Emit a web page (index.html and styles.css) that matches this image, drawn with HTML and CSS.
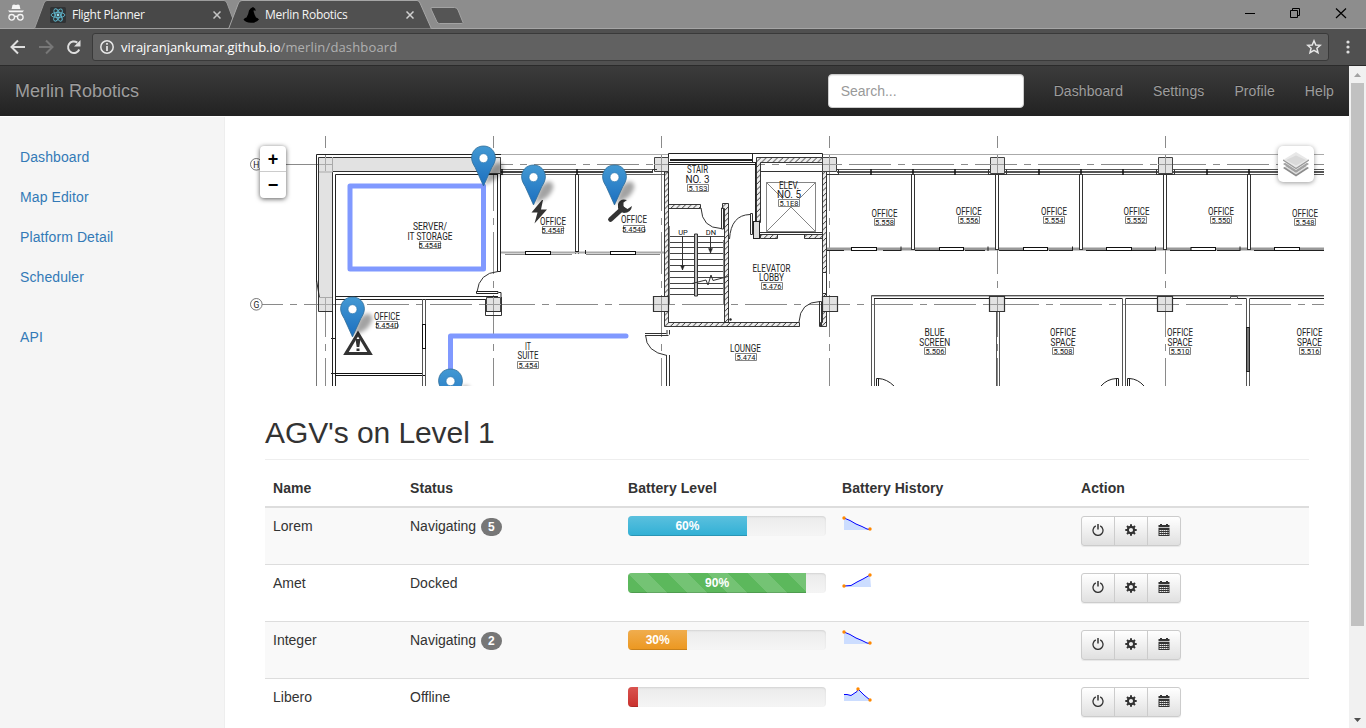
FILE: index.html
```html
<!DOCTYPE html>
<html lang="en">
<head>
<meta charset="utf-8">
<title>Merlin Robotics</title>
<link rel="stylesheet" href="styles.css">
</head>
<body>
<svg class="defs" width="0" height="0">
  <defs>
    <linearGradient id="pinFill" x1="0" y1="0" x2="0" y2="1"><stop offset="0" stop-color="#4399d3"/><stop offset="1" stop-color="#1c6fbf"/></linearGradient>
    <filter id="soft" x="-50%" y="-50%" width="200%" height="200%"><feGaussianBlur stdDeviation="2.2"/></filter>
    <pattern id="hatch" width="5.6" height="5.6" patternUnits="userSpaceOnUse"><rect width="5.6" height="5.6" fill="#eee"/><path d="M-1 6.6L6.6 -1M-1 1L1 -1M4.6 6.6L6.6 4.6" stroke="#222" stroke-width=".9"/></pattern>
    <symbol id="pin" viewBox="0 0 60 42" overflow="visible">
      <path d="M13 40L19 23Q25 15 31 18Q35 24 26 33Z" fill="#000" opacity=".36" filter="url(#soft)"/>
      <path d="M12.5 .5C5.5 .5 .6 5.800 .6 12.400C.6 16 2.400 19 4.200 22L12.500 40.400L20.800 22C22.600 19 24.400 16 24.400 12.400C24.400 5.800 19.500 .5 12.500 .5Z" fill="url(#pinFill)" stroke="#2e6c97" stroke-width=".8"/>
      <circle cx="12.5" cy="12.7" r="4.5" fill="#fff" stroke="#2e78b0" stroke-width=".7"/>
    </symbol>
    <symbol id="power" viewBox="0 0 12 12"><path d="M3.8 1.9A5 5 0 1 0 8.2 1.9" fill="none" stroke="#333" stroke-width="1.3"/><path d="M6 0V5.6" stroke="#333" stroke-width="1.5"/></symbol>
    <symbol id="gear" viewBox="0 0 12 12"><circle cx="6" cy="6" r="3.1" fill="none" stroke="#333" stroke-width="2.1"/><path d="M6 .3V2.4M6 9.6V11.7M.3 6H2.4M9.6 6H11.7M2 2L3.5 3.5M8.5 8.5L10 10M10 2L8.5 3.5M3.5 8.5L2 10" stroke="#333" stroke-width="2"/></symbol>
    <symbol id="calendar" viewBox="0 0 12 12"><path d="M.5 1H2V0H4V1H8V0H10V1H11.5V3.2H.5ZM.5 4H11.5V12H.5Z" fill="#333"/><path d="M1.5 6.500H10.500M1.500 8.500H10.500M1.500 10.500H10.500" stroke="#fff" stroke-width=".9" stroke-dasharray="1.5 .5"/></symbol>
  </defs>
</svg>

<header class="browser">
  <div class="titlebar">
    <svg class="tab-shapes" width="480" height="29">
      <path d="M34.500 28.500L44 3Q45 .5 47 .5H224Q226 .5 227 3L236.500 28.500Z" fill="#484848" stroke="#9c9c9c"/>
      <path d="M228.500 29L238.500 3Q239.500 .5 242 .5H417Q419 .5 420 3L431.500 29Z" fill="#505050" stroke="#a6a6a6"/>
      <path d="M432 7.500H454.500Q457 7.500 458 10L463 22.500Q463 23.500 461 23.500H439.500Q438 23.500 437 22L431 9Q430.500 7.500 432 7.500Z" fill="#555" stroke="#a3a3a3"/>
    </svg>
    <svg class="incognito" width="18" height="18" viewBox="0 0 18 18"><path d="M4.600 5L5.500 1Q6.500 .1 9 .9Q11.500 .1 12.500 1L13.400 5Z" fill="#f5f5f5"/><path d="M1 6.500H17L15.500 8.200H2.500Z" fill="#f5f5f5"/><g fill="none" stroke="#f5f5f5" stroke-width="1.300"><circle cx="4.700" cy="13.300" r="2.800"/><circle cx="13.300" cy="13.300" r="2.800"/><path d="M7.500 13Q9 11.500 10.500 13"/></g></svg>
    <div class="tab tab-one">
      <svg width="16" height="16" viewBox="0 0 16 16"><rect width="16" height="16" rx="1.500" fill="#303335"/><g fill="none" stroke="#5fb6cc" stroke-width=".9"><ellipse cx="8" cy="8" rx="6.900" ry="2.600"/><ellipse cx="8" cy="8" rx="6.900" ry="2.600" transform="rotate(60 8 8)"/><ellipse cx="8" cy="8" rx="6.900" ry="2.600" transform="rotate(120 8 8)"/></g><circle cx="8" cy="8" r="1.400" fill="#8fdbec"/></svg>
      <span class="tab-name">Flight Planner</span>
      <svg class="x" width="8" height="8" viewBox="0 0 8 8"><path d="M.5 .5L7.500 7.500M7.500 .5L.5 7.500" stroke="#c4c4c4" stroke-width="1.500"/></svg>
    </div>
    <div class="tab tab-two">
      <svg width="16" height="16" viewBox="0 0 16 16"><path d="M.5 12.500Q2 10.500 3.500 10.500Q5.500 7 6 3.500Q7 1 10 0Q13 1.500 12.500 4Q10.500 2.500 10.500 4Q11.500 8 13 10.500Q15 11 16 12.500Q14 15.600 8 15.800Q2 15.600 .5 12.500Z" fill="#000"/></svg>
      <span class="tab-name">Merlin Robotics</span>
      <svg class="x" width="8" height="8" viewBox="0 0 8 8"><path d="M.5 .5L7.500 7.500M7.500 .5L.5 7.500" stroke="#d0d0d0" stroke-width="1.500"/></svg>
    </div>
    <svg class="window-buttons" width="102" height="12" viewBox="0 0 102 12" fill="none" stroke="#000"><path d="M0 6.500H10"/><path d="M45.500 3.500H52.500V10.500H45.500ZM47.500 3.500V1.500H54.500V8.500H52.500"/><path d="M91 1.500L101 11M101 1.500L91 11" stroke-width="1.200"/></svg>
  </div>
  <div class="toolbar">
    <svg class="nav-icons" width="74" height="16" viewBox="0 0 74 16" fill="none"><path d="M15 8H2M8 1.500L1.500 8L8 14.500" stroke="#dedede" stroke-width="2"/><path d="M29 8H42M36 1.500L42.500 8L36 14.500" stroke="#777" stroke-width="2"/><path d="M69.200 10.500A5.800 5.800 0 1 1 67.300 3.600" stroke="#dedede" stroke-width="2"/><path d="M70.500 1V7.500H64Z" fill="#dedede"/></svg>
    <div class="omnibox">
      <svg width="14" height="14" viewBox="0 0 14 14"><circle cx="7" cy="7" r="6.200" fill="none" stroke="#e8e8e8" stroke-width="1.500"/><path d="M7 3V4.800M7 6V11" stroke="#e8e8e8" stroke-width="1.700"/></svg>
      <span class="url"><span class="host">virajranjankumar.github.io</span><span class="path">/merlin/dashboard</span></span>
      <svg class="star" width="16" height="16" viewBox="0 0 16 16"><path d="M8 1.800L9.800 6L14.300 6.300L10.900 9.200L12 13.700L8 11.300L4 13.700L5.100 9.200L1.700 6.300L6.200 6Z" fill="none" stroke="#e6e6e6" stroke-width="1.500"/></svg>
    </div>
    <svg class="menu" width="4" height="14" viewBox="0 0 4 14" fill="#dedede"><circle cx="2" cy="2" r="1.600"/><circle cx="2" cy="7" r="1.600"/><circle cx="2" cy="12" r="1.600"/></svg>
  </div>
</header>

<div class="viewport">
  <div class="page">
    <nav class="navbar">
      <a class="brand">Merlin Robotics</a>
      <input class="search" type="text" placeholder="Search...">
      <a>Dashboard</a><a>Settings</a><a>Profile</a><a>Help</a>
    </nav>
    <div class="columns">
      <aside class="sidebar">
        <ul><li>Dashboard</li><li>Map Editor</li><li>Platform Detail</li><li>Scheduler</li></ul>
        <ul><li>API</li></ul>
      </aside>
      <main class="content">
        <div class="map">
<svg class="plan" width="1074" height="250" viewBox="250 136 1074 250">
  <!-- structural grid -->
  <g fill="none" stroke="#8a8a8a" stroke-dasharray="42 7 7 7">
    <path d="M262 164.500H1324" stroke-dashoffset="43"/><path d="M262 304.500H1324" stroke-dashoffset="21"/>
    <path d="M325.500 136V386M493.500 136V386M661.500 136V386M829.500 136V386M997.500 136V386M1165.500 136V386" stroke-dashoffset="30"/>
  </g>
  <g fill="#fff" stroke="#555" stroke-width=".8"><circle cx="256.300" cy="164.300" r="5.800"/><circle cx="256.300" cy="304.300" r="5.800"/></g>
  <path d="M501 154.500H669M823 154.500H1324" stroke="#aaa" fill="none"/>
  <path d="M316.500 280V386" stroke="#777" fill="none"/>
  <!-- server room shell -->
  <path d="M318.500 157.500H500.500V171.500H332.500V311.500H318.500Z" fill="#e2e2e2" stroke="#333"/>
  <path d="M316.500 282V154.500H501M316.500 280L319.500 298M335.500 386V174.500H498M335 296.500H498M335 299.500H486" fill="none" stroke="#222"/>
  <path d="M325.500 157V171M319 164.500H332M332.500 157V172H319M325.500 297V311M319 304.500H332M319 297.500H332" fill="none" stroke="#aaa"/>
  <path d="M332.500 311V386M331 338.500H336M331 373.500H336" fill="none" stroke="#222"/>
  <path d="M497.500 174V271.500H500.500V172" fill="#fff" stroke="#222"/>
  <path d="M498 271.500Q479 273 477 292" fill="none" stroke="#333"/><path d="M476.500 291.500H498V293.500H476.500ZM498.500 292.500H501V297" fill="none" stroke="#222"/>
  <path d="M335 373.500H422M335 375.500H425" fill="none" stroke="#111"/>
  <path d="M422.500 299V386M425.500 299V386" stroke="#555"/><rect x="422.500" y="324.500" width="3" height="24" fill="#fff" stroke="#111"/>
  <!-- offices west -->
  <g fill="none"><path d="M501 169.500H653M501 174.500H664" stroke="#666"/><path d="M501 172H653" stroke="#444" stroke-width="2"/><path d="M577 169V175M502 169V175" stroke="#111" stroke-width="1.500"/></g>
  <path d="M575.500 174V254M578.500 174V254" stroke="#333"/><path d="M501 252.500H664" stroke="#aaa" stroke-width="2"/><path d="M505 254.500H525M550 254.500H572M586 254.500H611M635 254.500H660" stroke="#888" fill="none"/>
  <g fill="#fff" stroke="#111"><rect x="525.500" y="251.500" width="25" height="3"/><rect x="610.500" y="251.500" width="25" height="3"/></g>
  <path d="M585.500 250V254M575 251.500H579" stroke="#222"/>
  <!-- stair core -->
  <g fill="none" stroke="#222"><path d="M668.500 204V153.500H822.500V157M668 164.500H756M752.500 154V162M669 162.500H756M755.500 162V222"/><path d="M670 160H752" stroke-width="1.800"/></g>
  <g fill="url(#hatch)" stroke="#222" stroke-width=".9">
    <path d="M664.500 172V326.500H799.500V322.500H668.500V172Z"/>
    <path d="M668.500 204.500H700.500V208.500H668.500Z"/>
    <path d="M722.500 203.500H728.500V322.500H724.500V208.500H722.500Z"/>
    <path d="M756.500 157.500H822.500V162.500H760.500V222.500H756.500Z"/>
    <path d="M760.500 234.500H777.500V238.500H760.500ZM804.500 234.500H822.500V238.500H804.500Z"/>
    <path d="M822.500 171.500H826.500V272.500H822.500ZM822.500 293.500H826.500V326.500H820.500V322.500H822.500Z"/>
  </g>
  <path d="M822.500 272.500H826.500V293.500H822.500Z" fill="#fff" stroke="#333"/>
  <rect x="753.500" y="221.500" width="6" height="17" fill="#ddd" stroke="#222"/>
  <path d="M760 171.500H822M760 232.500H822M760 234.500H822" stroke="#333" fill="none"/>
  <path d="M766.500 182.500H815.500V231.500H766.500ZM766.500 182.500L815.500 231.500M815.500 182.500L766.500 231.500" fill="none" stroke="#777" stroke-width=".9"/>
  <g fill="none" stroke="#333"><path d="M701 208Q702 228 721 228.500M721.500 208H723.500V229H721.500ZM750 214.500Q731 215 729.500 239M750.500 213.500H752.500V234.500H750.500Z"/>
    <path d="M669 236.500H724M669 242.500H724M669 247.500H724M669 253.500H724M669 259.500H724M669 265.500H724M669 271.500H724M669 277.500H724M669 283.500H724M669 288.500H724M669 294.500H724" stroke="#444"/>
    <path d="M694.500 234V296H697.500V234Z" fill="#bbb"/><path d="M669.500 226V305M723.500 240V305" stroke="#888"/>
    <path d="M682.500 236V270M710.500 236V253M692 283.500L706 280L708 285L711 275L713 280.500L728 276.500"/><path d="M680.500 265.500L682.500 270L684.500 265.500ZM708.500 248.500L710.500 253L712.500 248.500Z" fill="#222" stroke-width=".5"/>
    <path d="M820 301.500Q800 302 799 322M819.500 301.500H821.500V326.500H819.500Z"/>
    <path d="M667 355.500Q646 352 645.500 335M645 333.500H666.500M645 335.500H668.500M667 330V334.500M669.500 330V334.500M666.500 355V386M669.500 355V386"/>
  </g>
  <circle cx="730.500" cy="319.500" r="1.200" fill="#222"/>
  <!-- offices east -->
  <g fill="none"><path d="M827 169.500H1324M827 174.500H1324" stroke="#555"/><path d="M837 172H1324" stroke="#555" stroke-width="1.800"/><path d="M871 169V175M913 169V175M955 169V175M1039 169V175M1081 169V175M1123 169V175M1207 169V175M1249 169V175" stroke="#111" stroke-width="1.500"/>
    <path d="M827 249H1324" stroke="#999" stroke-width="3"/><path d="M827 250.500H844M883 250.500H901M915 250.500H939M965 250.500H985M999 250.500H1024M1049 250.500H1073M1086 250.500H1107M1132 250.500H1155M1170 250.500H1191M1217 250.500H1240M1254 250.500H1275M1300 250.500H1324" stroke="#222"/></g>
  <g fill="#fff" stroke="#333"><rect x="911.500" y="174.500" width="3" height="75"/><rect x="995.500" y="174.500" width="3" height="75"/><rect x="1079.500" y="174.500" width="3" height="75"/><rect x="1163.500" y="174.500" width="3" height="75"/><rect x="1247.500" y="174.500" width="3" height="75"/></g>
  <g fill="#fff" stroke="#111"><rect x="851.500" y="247.500" width="25" height="3"/><rect x="939.500" y="247.500" width="24" height="3"/><rect x="1023.500" y="247.500" width="24" height="3"/><rect x="1106.500" y="247.500" width="25" height="3"/><rect x="1191" y="247.500" width="24.500" height="3"/><rect x="1274.500" y="247.500" width="25" height="3"/></g>
  <path d="M901 246.500V251M988 246.500V251M1072.500 246.500V251M1155.500 246.500V251M1240 246.500V251" stroke="#222"/>
  <!-- lower rooms -->
  <g fill="none" stroke="#555"><path d="M871.500 386V295.500H1324M874.500 386V298.500H990M1005 298.500H1122.500V386M1125.500 386V298.500H1157M1173 298.500H1246.500V386M1249.500 386V298.500H1324"/><path d="M872 296.500H1324" stroke="#bbb"/><path d="M996.500 312V386M999.500 312V386"/></g>
  <path d="M874 298.500H989M1005 298.500H1122M1126 298.500H1157M1173 298.500H1246M1250 298.500H1324" stroke="#222"/>
  <rect x="1246.500" y="327.500" width="3" height="44" fill="#777" stroke="#222"/>
  <path d="M1230.500 296.500H1237.500V298.500H1230.500Z" fill="#fff" stroke="#555"/>
  <path d="M878.500 386V378.500Q887 379 894 386M876.500 386V378.500H879M1116.500 386V378.500Q1107 379 1101 386M1118.500 386V378.500H1116M1129.500 386V378.500Q1138 379 1144 386M1127.500 386V378.500H1130" fill="none" stroke="#222"/>
  <!-- columns -->
  <g fill="#e2e2e2" stroke="#444"><path d="M486.500 157.500H500.500V173.500H486.500ZM654.500 157.500H668.500V171.500H654.500ZM822.500 157.500H836.500V171.500H822.500ZM990.500 157.500H1004.500V173.500H990.500ZM1158.500 157.500H1172.500V173.500H1158.500ZM486.500 297.500H500.500V311.500H486.500Z"/>
    <path d="M653.500 296.500H668.500V311.500H653.500ZM822.500 296.500H837.500V311.500H822.500ZM989.500 296.500H1004.500V311.500H989.500ZM1157.500 296.500H1172.500V311.500H1157.500Z" stroke="#333" stroke-width="1.200"/></g>
  <path d="M485.500 299V315.500H501.500V297M486 311.500H501M652.500 172V169.500H657M836.500 169.500H838.500V174.500H827M988.500 169.500V174.500H1006.500V169.500M1156.500 169.500V174.500H1174.500V169.500" fill="none" stroke="#333"/>
  <path d="M486 304.500H501M493.500 297V311M654 164.500H668M661.500 157V171M654 304.500H668M661.500 297V311M823 164.500H837M829.500 157V171M823 304.500H837M829.500 297V311M990 164.500H1004M997.500 157V173M990 304.500H1004M997.500 297V311M1158 164.500H1172M1165.500 157V173M1158 304.500H1172M1165.500 297V311" stroke="#999" fill="none"/>
  <!-- vehicle paths -->
  <g fill="none" stroke="#8099ff" stroke-width="5" stroke-linejoin="round" stroke-linecap="round"><path d="M350 186H483.500V269H350Z"/><path d="M450.500 386V336H626"/></g>
  <!-- event icons and vehicles -->
  <path d="M358 333.500L370 353.500H346Z" fill="#fff" stroke="#333" stroke-width="3.200"/><path d="M355.500 339H360.500L359.300 347H356.700ZM356.500 348.500H359.500V351H356.500Z" fill="#333"/>
  <path d="M542 200L531.500 212.500H537.500L534.500 223.500L547 209.500H541L543 200Z" fill="#333"/>
  <path d="M610.500 219.500L622.500 208.500" stroke="#333" stroke-width="4.800" stroke-linecap="round"/><path d="M627 200Q620 198 618 204Q617 212 624 213Q631 213 632 206L627.500 209L623.500 206.500L623.500 202.500Z" fill="#333"/>
  <use href="#pin" x="471" y="145.500" width="60" height="42"/><use href="#pin" x="521" y="164.500" width="60" height="42"/><use href="#pin" x="602" y="164.500" width="60" height="42"/><use href="#pin" x="340" y="296.500" width="60" height="42"/><use href="#pin" x="438" y="368.500" width="60" height="42"/>
  <!-- room names -->
  <g class="room">
    <text x="256.300" y="167.500" font-size="8.500">H</text><text x="256.300" y="307.500" font-size="8.500">G</text>
    <text x="430" y="229.500" textLength="34" lengthAdjust="spacingAndGlyphs">SERVER/</text><text x="430" y="239.500" textLength="45" lengthAdjust="spacingAndGlyphs">IT STORAGE</text>
    <text x="387" y="319.500" textLength="26" lengthAdjust="spacingAndGlyphs">OFFICE</text>
    <text x="553" y="225" textLength="26" lengthAdjust="spacingAndGlyphs">OFFICE</text><text x="634" y="223" textLength="26" lengthAdjust="spacingAndGlyphs">OFFICE</text>
    <text x="528" y="349.500" textLength="6" lengthAdjust="spacingAndGlyphs">IT</text><text x="528" y="359" textLength="21" lengthAdjust="spacingAndGlyphs">SUITE</text>
    <text x="697.500" y="173" textLength="21" lengthAdjust="spacingAndGlyphs">STAIR</text><text x="697.500" y="182.500" textLength="24" lengthAdjust="spacingAndGlyphs">NO. 3</text>
    <text x="789" y="188.500" textLength="20" lengthAdjust="spacingAndGlyphs">ELEV.</text><text x="789" y="198" textLength="24" lengthAdjust="spacingAndGlyphs">NO. 5</text>
    <text x="771.500" y="271.500" textLength="38" lengthAdjust="spacingAndGlyphs">ELEVATOR</text><text x="771.500" y="281" textLength="25" lengthAdjust="spacingAndGlyphs">LOBBY</text>
    <text x="745.500" y="352" textLength="31" lengthAdjust="spacingAndGlyphs">LOUNGE</text>
    <text x="884.500" y="216.500" textLength="26" lengthAdjust="spacingAndGlyphs">OFFICE</text><text x="968.700" y="215" textLength="26" lengthAdjust="spacingAndGlyphs">OFFICE</text><text x="1054" y="215" textLength="26" lengthAdjust="spacingAndGlyphs">OFFICE</text><text x="1136.500" y="215" textLength="26" lengthAdjust="spacingAndGlyphs">OFFICE</text><text x="1221" y="215" textLength="26" lengthAdjust="spacingAndGlyphs">OFFICE</text><text x="1305" y="216.500" textLength="26" lengthAdjust="spacingAndGlyphs">OFFICE</text>
    <text x="934.500" y="336" textLength="20" lengthAdjust="spacingAndGlyphs">BLUE</text><text x="934.700" y="345.500" textLength="31" lengthAdjust="spacingAndGlyphs">SCREEN</text>
    <text x="1063" y="336" textLength="26" lengthAdjust="spacingAndGlyphs">OFFICE</text><text x="1063" y="345.500" textLength="25" lengthAdjust="spacingAndGlyphs">SPACE</text>
    <text x="1180" y="336" textLength="26" lengthAdjust="spacingAndGlyphs">OFFICE</text><text x="1180" y="345.500" textLength="25" lengthAdjust="spacingAndGlyphs">SPACE</text>
    <text x="1309.500" y="336" textLength="26" lengthAdjust="spacingAndGlyphs">OFFICE</text><text x="1309.500" y="345.500" textLength="25" lengthAdjust="spacingAndGlyphs">SPACE</text>
  </g>
  <path class="codebox" d="M419.500 241.500h21v7h-21zM376.500 321.500h21v7h-21zM542.500 226.500h21v7h-21zM623.500 225.500h21v7h-21zM517.500 361.500h21v7h-21zM687.500 184.500h21v7h-21zM778.500 199.500h21v7h-21zM761.500 282.500h21v7h-21zM735.500 353.500h21v7h-21zM874.500 218.500h20v7h-20zM958.500 216.500h21v7h-21zM1043.500 216.500h21v7h-21zM1125.500 216.500h21v7h-21zM1210.500 216.500h21v7h-21zM1294.500 218.500h21v7h-21zM924.500 347.500h21v7h-21zM1052.500 347.500h21v7h-21zM1169.500 347.500h21v7h-21zM1299.500 347.500h21v7h-21z"/>
  <g class="code">
    <text x="430" y="248">5.454E</text><text x="387" y="328">5.454D</text><text x="553" y="233">5.454F</text><text x="634" y="232">5.454G</text><text x="528" y="368">5.454</text><text x="698" y="191">5.1S3</text><text x="789" y="206">5.1E8</text><text x="772" y="289">5.476</text><text x="746" y="360">5.474</text><text x="884.500" y="225">5.558</text><text x="969" y="223">5.556</text><text x="1054" y="223">5.554</text><text x="1136" y="223">5.552</text><text x="1221" y="223">5.550</text><text x="1305" y="225">5.548</text><text x="935" y="354">5.506</text><text x="1063" y="354">5.508</text><text x="1180" y="354">5.510</text><text x="1310" y="354">5.516</text>
    <text x="683" y="234.500">UP</text><text x="711" y="234.500">DN</text>
  </g>
</svg>
          <div class="zoom"><span>+</span><span>−</span></div>
          <div class="layers"><svg width="26" height="26" viewBox="0 0 26 26"><path d="M0 17L13 9L26 17L13 25.500Z" fill="#8b8b8b"/><path d="M0 13L13 21.500L26 13V15L13 23.500L0 15Z" fill="#fff" opacity=".7"/><path d="M0 13L13 5L26 13L13 21.500Z" fill="#a2a2a2"/><path d="M0 9L13 17.500L26 9V10.500L13 19L0 10.500Z" fill="#fff" opacity=".8"/><path d="M0 9L13 1L26 9L13 17.500Z" fill="#e8e8e8"/><path d="M0 9L13 17.500L26 9" fill="none" stroke="#999" stroke-width="1.200"/><path d="M3 9L13 4.500L23 9L13 14.500Z" fill="#d9d9d9"/></svg></div>
        </div>
        <section class="agvs">
          <h2>AGV's on Level 1</h2>
          <table>
            <colgroup><col class="c-name"><col class="c-status"><col class="c-level"><col class="c-history"><col class="c-action"></colgroup>
            <thead><tr><th>Name</th><th>Status</th><th>Battery Level</th><th>Battery History</th><th>Action</th></tr></thead>
            <tbody>
              <tr><td>Lorem</td><td>Navigating <span class="badge">5</span></td><td><div class="progress"><div class="bar info" style="width:60%">60%</div></div></td>
                <td><svg class="spark" width="32" height="18"><path d="M2 2L25 13L28 13.500V14H2Z" fill="#cdf"/><path d="M2 2L8 4.500L14 8L20 10.500L25 13L28 13.500" fill="none" stroke="#00f"/><circle cx="2" cy="2" r="1.700" fill="#f80"/><circle cx="28" cy="13" r="1.700" fill="#f80"/></svg></td>
                <td><div class="btns"><button><svg><use href="#power"/></svg></button><button><svg><use href="#gear"/></svg></button><button><svg><use href="#calendar"/></svg></button></div></td></tr>
              <tr><td>Amet</td><td>Docked</td><td><div class="progress"><div class="bar success" style="width:90%">90%</div></div></td>
                <td><svg class="spark" width="32" height="18"><path d="M2 13.500L9 12.500L15 9L21 6L28 2L29 14H2Z" fill="#cdf"/><path d="M2 13L9 12.500L15 9L21 6L28 2" fill="none" stroke="#00f"/><circle cx="2" cy="13" r="1.700" fill="#f80"/><circle cx="28" cy="2" r="1.700" fill="#f80"/></svg></td>
                <td><div class="btns"><button><svg><use href="#power"/></svg></button><button><svg><use href="#gear"/></svg></button><button><svg><use href="#calendar"/></svg></button></div></td></tr>
              <tr><td>Integer</td><td>Navigating <span class="badge">2</span></td><td><div class="progress"><div class="bar warning" style="width:30%">30%</div></div></td>
                <td><svg class="spark" width="32" height="18"><path d="M2 2L25 13L28 13.500V14H2Z" fill="#cdf"/><path d="M2 2L8 4.500L14 8L20 10.500L25 13L28 13.500" fill="none" stroke="#00f"/><circle cx="2" cy="2" r="1.700" fill="#f80"/><circle cx="28" cy="13" r="1.700" fill="#f80"/></svg></td>
                <td><div class="btns"><button><svg><use href="#power"/></svg></button><button><svg><use href="#gear"/></svg></button><button><svg><use href="#calendar"/></svg></button></div></td></tr>
              <tr><td>Libero</td><td>Offline</td><td><div class="progress"><div class="bar danger" style="width:5%"></div></div></td>
                <td><svg class="spark" width="32" height="18"><path d="M2 7.500H5L9 8.500L15 4.500L16 2L22 8L28 13V14H2Z" fill="#cdf"/><path d="M2 7.500H5L9 8.500L15 4.500L16 2L22 8L28 13" fill="none" stroke="#00f"/><circle cx="16" cy="2" r="1.700" fill="#f80"/><circle cx="28" cy="13" r="1.700" fill="#f80"/></svg></td>
                <td><div class="btns"><button><svg><use href="#power"/></svg></button><button><svg><use href="#gear"/></svg></button><button><svg><use href="#calendar"/></svg></button></div></td></tr>
            </tbody>
          </table>
        </section>
      </main>
    </div>
  </div>
  <div class="scrollbar">
    <svg width="17" height="17"><path d="M5 11L8.500 7L12 11Z" fill="#a3a3a3"/></svg>
    <div class="thumb"></div>
    <svg width="17" height="17"><path d="M5 7L8.500 11L12 7Z" fill="#505050"/></svg>
  </div>
</div>
</body>
</html>
```
FILE: styles.css
```css
* { box-sizing: border-box; }
html, body { height: 728px; overflow: hidden; }
body { margin: 0; display: flex; flex-direction: column; font: 14px/20px "Liberation Sans", Arial, sans-serif; color: #333; background: #fff; }
svg { display: block; flex: none; }
.defs { position: absolute; }

/* browser window */
.browser { flex: none; height: 66px; background: #505050; border-bottom: 1px solid #2b2b2b; font-family: "Open Sans", "Noto Sans", sans-serif; }
.titlebar { position: relative; display: flex; align-items: flex-start; height: 29px; background: #8d8d8d; border-bottom: 1px solid #a6a6a6; }
.tab-shapes { position: absolute; left: 0; top: 0; }
.incognito { margin: 4px 0 0 7px; }
.tab { position: relative; display: flex; align-items: center; height: 28px; padding-top: 2px; font-size: 12px; color: #f4f4f4; }
.tab-one { width: 193px; margin-left: 25px; }
.tab-two { width: 193px; }
.tab-name { flex: 1; margin-left: 6px; letter-spacing: -.3px; white-space: nowrap; }
.tab .x { margin-right: 22px; }
.window-buttons { margin: 7px 19px 0 auto; }
.toolbar { display: flex; align-items: center; height: 36px; padding: 0 16px 0 10px; }
.nav-icons { margin-right: 8px; }
.omnibox { flex: 1; display: flex; align-items: center; height: 28px; padding: 0 6px 0 7px; background: #616161; border: 1px solid #3a3a3a; border-radius: 3px; font-size: 13px; }
.url { flex: 1; margin-left: 7px; white-space: nowrap; }
.host { color: #fff; letter-spacing: -.05px; }
.path { color: #b0b0b0; letter-spacing: .15px; }
.menu { margin-left: 17px; }

/* page */
.viewport { flex: 1; min-height: 0; display: flex; }
.page { flex: 1; min-width: 0; display: flex; flex-direction: column; overflow: hidden; }
.navbar { flex: none; height: 50px; display: flex; align-items: center; background: linear-gradient(#3c3c3c, #222); color: #9d9d9d; text-shadow: 0 -1px 0 rgba(0,0,0,.25); }
.navbar a { padding: 0 15px; letter-spacing: .1px; }
.navbar .brand { font-size: 18px; margin-right: auto; letter-spacing: 0; }
.search { width: 196px; height: 34px; margin-right: 15px; padding: 6px 12px; font: 14px "Liberation Sans", Arial, sans-serif; border: 1px solid #ccc; border-radius: 4px; background: #fff; box-shadow: inset 0 1px 1px rgba(0,0,0,.075); }
.search::placeholder { color: #999; opacity: 1; }
.columns { flex: 1; min-height: 0; display: flex; padding-top: 1px; }
.sidebar { width: 225px; padding: 20px 0 0 20px; background: #f5f5f5; border-right: 1px solid #eee; color: #337ab7; letter-spacing: .1px; }
.sidebar ul { margin: 0 0 20px; padding: 0; list-style: none; }
.sidebar li { padding: 10px 0; }
.content { flex: 1; min-width: 0; padding: 19px 25px 0; overflow: hidden; }
.map { position: relative; height: 250px; }
.room { font: 400 10.8px Roboto, sans-serif; fill: #222; text-anchor: middle; }
.code { font: 7.5px Roboto, sans-serif; fill: #111; text-anchor: middle; }
.codebox { fill: #fff; stroke: #777; stroke-width: .9; }
.zoom { position: absolute; left: 10px; top: 10px; width: 26px; background: #fff; border-radius: 4px; box-shadow: 0 1px 5px rgba(0,0,0,.65); text-align: center; font: bold 18px/26px "Liberation Sans", Arial, sans-serif; color: #000; }
.zoom span { display: block; height: 26px; }
.zoom span:first-child { height: 26px; border-bottom: 1px solid #ccc; }
.layers { position: absolute; left: 1028px; top: 10px; padding: 5px; background: #fff; border-radius: 5px; box-shadow: 0 1px 5px rgba(0,0,0,.4); }
.agvs { padding: 0 15px; }
h2 { margin: 30px 0 10px; padding-bottom: 10px; font-size: 30px; line-height: 33px; font-weight: 400; letter-spacing: -.08px; border-bottom: 1px solid #eee; }
table { width: 1044px; table-layout: fixed; border-collapse: collapse; }
.c-name { width: 137px; }
.c-status { width: 218px; }
.c-level { width: 214px; }
.c-history { width: 239px; }
th, td { padding: 8px; text-align: left; vertical-align: top; }
th { border-bottom: 2px solid #ddd; letter-spacing: .07px; }
td { height: 57px; border-top: 1px solid #ddd; }
tbody tr:nth-child(odd) { background: #f9f9f9; }
.badge { display: inline-block; min-width: 10px; margin-left: 1px; padding: 3px 7px; border-radius: 10px; background: #777; color: #fff; font-size: 12px; font-weight: 700; line-height: 12px; text-align: center; vertical-align: middle; }
.progress { height: 20px; overflow: hidden; border-radius: 4px; background: linear-gradient(#ebebeb, #f5f5f5); box-shadow: inset 0 1px 2px rgba(0,0,0,.1); }
.bar { height: 100%; color: #fff; font-size: 12px; font-weight: 700; text-align: center; box-shadow: inset 0 -1px 0 rgba(0,0,0,.15); }
.info { background: linear-gradient(#5bc0de, #31b0d5); }
.success { background: linear-gradient(45deg, rgba(255,255,255,.15) 25%, transparent 25%, transparent 50%, rgba(255,255,255,.15) 50%, rgba(255,255,255,.15) 75%, transparent 75%, transparent) 0 0 / 40px 40px #5cb85c; }
.warning { background: linear-gradient(#f0ad4e, #ec971f); }
.danger { background: linear-gradient(#d9534f, #c9302c); }
.btns { display: flex; width: 100px; height: 30px; border: 1px solid #ccc; border-radius: 3px; background: linear-gradient(#fff, #e0e0e0); box-shadow: 0 1px 1px rgba(0,0,0,.075); }
button { flex: 1; display: flex; align-items: center; justify-content: center; padding: 0 0 2px; border: 0; background: none; }
button + button { border-left: 1px solid #ccc; }
button svg { width: 12px; height: 12px; }
.scrollbar { flex: none; width: 17px; background: #f1f1f1; display: flex; flex-direction: column; }
.thumb { height: 543px; margin: 0 2px auto; background: #c1c1c1; }
```
